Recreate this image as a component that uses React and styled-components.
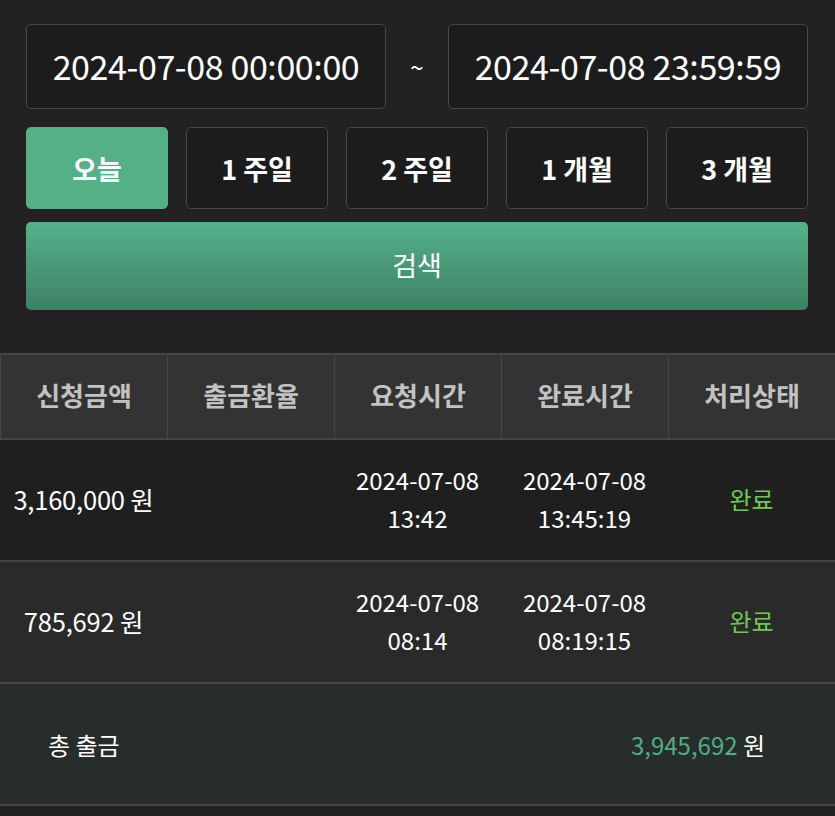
import React, { useState } from 'react';
import styled, { createGlobalStyle } from 'styled-components';

const GlobalStyle = createGlobalStyle`
    body {
        margin: 0;
        background: #222222;
        font-family: "Noto Sans CJK KR", "Noto Sans", sans-serif;
        color: #ffffff;
    }
`;

const periods = ['오늘', '1 주일', '2 주일', '1 개월', '3 개월'];

const rows = [
    { amount: '3,160,000', requestDate: '2024-07-08', requestTime: '13:42', doneDate: '2024-07-08', doneTime: '13:45:19', status: '완료' },
    { amount: '785,692', requestDate: '2024-07-08', requestTime: '08:14', doneDate: '2024-07-08', doneTime: '08:19:15', status: '완료' },
];

const columns = ['신청금액', '출금환율', '요청시간', '완료시간', '처리상태'];

const App = () => {
    const [period, setPeriod] = useState(0);

    return (
        <Page>
            <GlobalStyle />
            <Filter>
                <DateRow>
                    <DateBox>2024-07-08 00:00:00</DateBox>
                    <Tilde>~</Tilde>
                    <DateBox>2024-07-08 23:59:59</DateBox>
                </DateRow>

                <PeriodRow>
                    {periods.map((p, i) =>
                        <PeriodButton key={p} active={i === period} onClick={() => setPeriod(i)}>{p}</PeriodButton>
                    )}
                </PeriodRow>

                <SearchButton>검색</SearchButton>
            </Filter>

            <Table>
                <HeadRow>
                    {columns.map(c => <HeadCell key={c}>{c}</HeadCell>)}
                </HeadRow>

                {rows.map((r, i) =>
                    <BodyRow key={i} odd={i % 2 === 1}>
                        <AmountCell>{r.amount} 원</AmountCell>
                        <Cell />
                        <Cell>{r.requestDate}<br />{r.requestTime}</Cell>
                        <Cell>{r.doneDate}<br />{r.doneTime}</Cell>
                        <StatusCell>{r.status}</StatusCell>
                    </BodyRow>
                )}

                <TotalRow>
                    <TotalLabel>총 출금</TotalLabel>
                    <TotalValue><strong>3,945,692</strong> 원</TotalValue>
                </TotalRow>
            </Table>
        </Page>
    );
};

const Page = styled.div`
    width: 835px;
    min-height: 816px;
    background: #222222;
`;

const Filter = styled.div`
    padding: 24px 27px 43px 26px;
`;

const DateRow = styled.div`
    display: grid;
    grid-template-columns: 1fr 62px 1fr;
    align-items: center;
`;

const DateBox = styled.div`
    height: 85px;
    padding-bottom: 3px;
    box-sizing: border-box;
    display: flex;
    align-items: center;
    justify-content: center;
    background: #1c1c1c;
    border: 1px solid #474747;
    border-radius: 5px;
    font-size: 34px;
    letter-spacing: -0.4px;
    color: #ffffff;
`;

const Tilde = styled.div`
    text-align: center;
    font-size: 24px;
    color: #ffffff;
`;

const PeriodRow = styled.div`
    display: grid;
    grid-template-columns: repeat(5, 1fr);
    gap: 18px;
    margin-top: 18px;
`;

const PeriodButton = styled.button`
    height: 82px;
    padding: 0;
    border-radius: 5px;
    border: 1px solid ${p => p.active ? '#55b088' : '#474747'};
    background: ${p => p.active ? '#55b088' : '#1c1c1c'};
    color: #ffffff;
    font-family: inherit;
    font-size: 27px;
    font-weight: 700;
    cursor: pointer;
`;

const SearchButton = styled.button`
    display: block;
    width: 100%;
    height: 88px;
    margin-top: 13px;
    padding: 0 0 3px;
    border: 0;
    border-radius: 5px;
    background: linear-gradient(to bottom, #55b28b, #3c8163);
    color: #ffffff;
    font-family: inherit;
    font-size: 27px;
    cursor: pointer;
`;

const Table = styled.div`
    border-top: 2px solid #454545;
`;

const HeadRow = styled.div`
    display: grid;
    grid-template-columns: repeat(5, 1fr);
    height: 83px;
    background: #333333;
    border-bottom: 2px solid #454545;
`;

const HeadCell = styled.div`
    display: flex;
    align-items: center;
    justify-content: center;
    padding-bottom: 4px;
    font-size: 26px;
    font-weight: 700;
    color: #c2c2c2;
    border-left: 1px solid #464646;

    :first-child {
        border-left: 0;
    }
`;

const BodyRow = styled.div`
    display: grid;
    grid-template-columns: repeat(5, 1fr);
    height: 120px;
    background: ${p => p.odd ? '#2a2a2a' : '#1f1f1f'};
    border-bottom: 2px solid #454545;
`;

const Cell = styled.div`
    display: flex;
    align-items: center;
    justify-content: center;
    padding-bottom: 2px;
    text-align: center;
    font-size: 24px;
    line-height: 38px;
    color: #ffffff;
`;

const AmountCell = styled(Cell)`
    font-size: 25.5px;
    letter-spacing: -0.2px;
`;

const StatusCell = styled(Cell)`
    color: #70c94f;
`;

const TotalRow = styled.div`
    display: flex;
    align-items: center;
    justify-content: space-between;
    height: 120px;
    padding: 0 70px 0 48px;
    background: #272d2b;
    border-bottom: 2px solid #454545;
`;

const TotalLabel = styled.div`
    font-size: 24px;
    color: #ffffff;
`;

const TotalValue = styled.div`
    font-size: 24px;
    color: #ffffff;

    strong {
        font-weight: 400;
        color: #4fae84;
    }
`;

export default App;
